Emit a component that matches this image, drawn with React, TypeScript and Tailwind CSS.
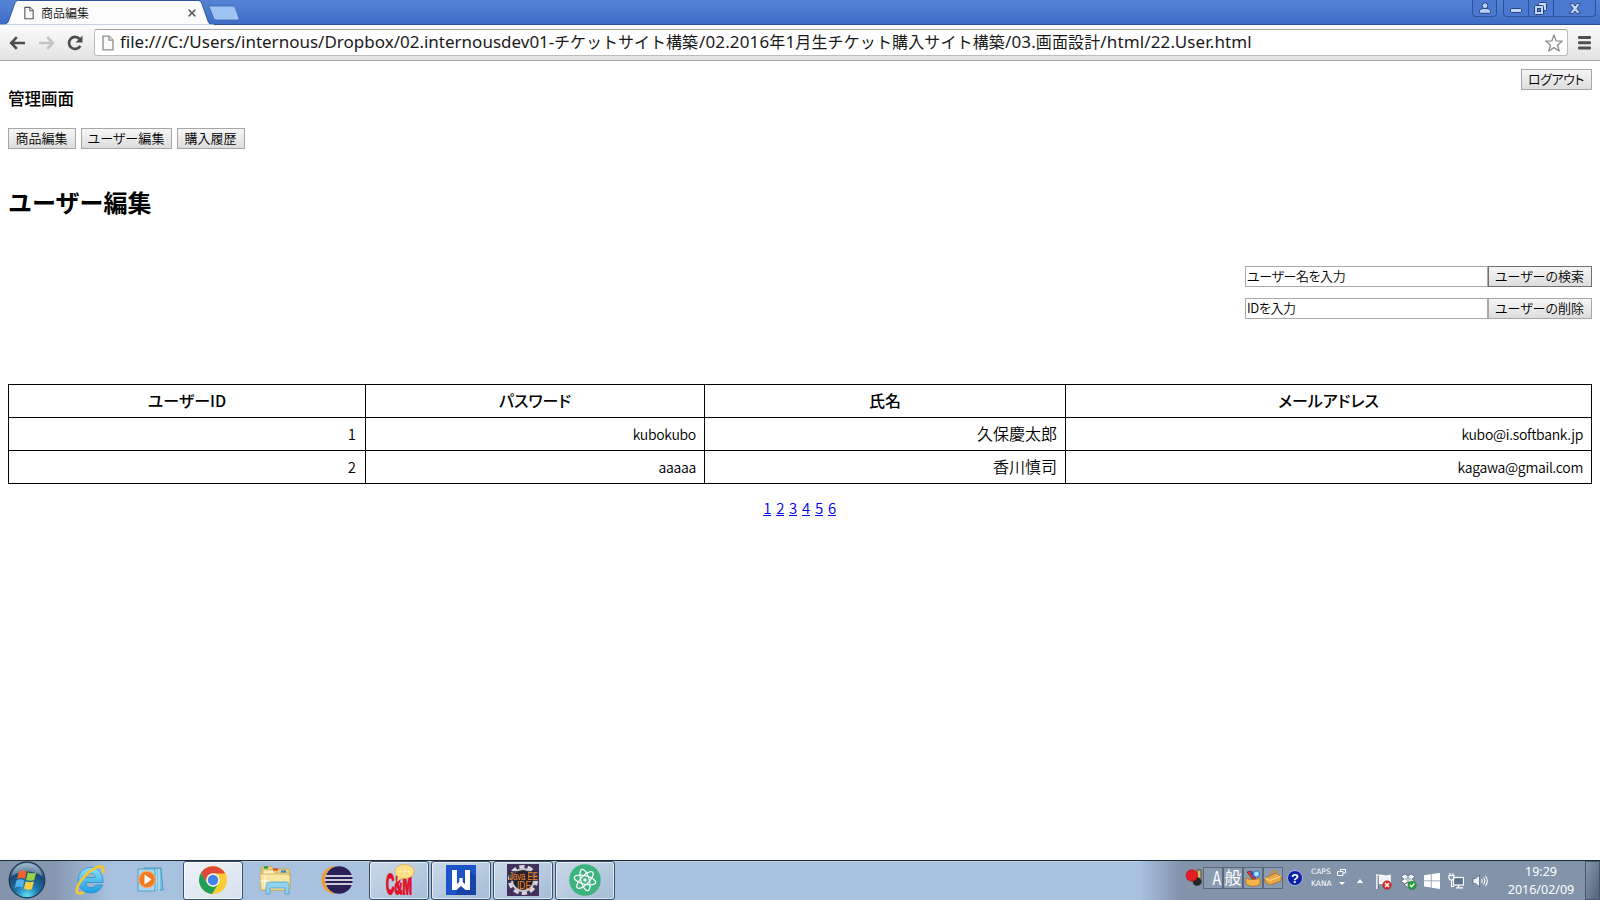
import type { ReactNode } from "react";

const users = [
  { id: "1", password: "kubokubo", name: "久保慶太郎", mail: "kubo@i.softbank.jp" },
  { id: "2", password: "aaaaa", name: "香川慎司", mail: "kagawa@gmail.com" },
];

const pages = ["1", "2", "3", "4", "5", "6"];

function PageIcon({ className }: { className: string }) {
  return (
    <svg viewBox="0 0 12 16" className={className} fill="#fbfbfb" strokeWidth="1.3" strokeLinejoin="round">
      <path d="M1 1.2h6.2l3.8 3.8v9.8H1z" />
      <path d="M7 1.2V5.2h4" />
    </svg>
  );
}

function TabStrip() {
  return (
    <div className="relative flex h-[25px] bg-linear-to-b from-[#5584d6] to-[#3f6dc6] border-b border-[#2c4f97]">
      <svg className="absolute left-0 top-0 h-[25px] w-[245px]" viewBox="0 0 245 25">
        <path d="M0 25c5 0 7-1 8.500-4L14.500 4c1-2.500 2-3.500 4-3.500H197.500c2.500 0 3.500 1 4.500 3.500l6 17c1 3 3 4 6 4z" fill="#fbfbfb" stroke="#2f539c" strokeWidth="1" />
        <path d="M0 24.500h214v.5H0z" fill="#fbfbfb" />
        <path d="M211 6h21c2 0 3 .6 3.600 2.300l3.300 10c.4 1.200 0 1.700-1 1.700h-21c-1.800 0-2.700-.6-3.400-2.300L209.600 8c-.5-1.300 0-2 1.400-2z" fill="#9fc3f3" stroke="#3c66b5" strokeWidth=".8" />
      </svg>
      <div className="relative flex w-[210px] items-center pl-[24px] pr-[14px] pt-[1px]">
        <PageIcon className="h-[14px] w-[10px] stroke-[#555]" />
        <span className="ml-[7px] font-['Noto_Sans_CJK_JP',sans-serif] text-[12px] font-[350] leading-none text-[#111]">商品編集</span>
        <svg viewBox="0 0 8 8" className="ml-auto h-[8px] w-[8px]" stroke="#5f5f5f" strokeWidth="1.500">
          <path d="M.6.6l6.800 6.800M7.400.6L.6 7.400" />
        </svg>
      </div>
      <div className="ml-auto mr-[4px] flex h-[17px] gap-[6px]">
        <div className="flex w-[25px] items-center justify-center rounded-b-[4px] border border-t-0 border-[#2d519b] bg-[#4b79cf]">
          <svg viewBox="0 0 12 12" className="h-[12px] w-[12px]" fill="#b9cff3" stroke="#25437f" strokeWidth="1">
            <path d="M1.500 11.300c-.6 0-1-.4-1-1V9.200c0-1.500 1.800-2.400 3.500-2.700h4c1.700.3 3.500 1.200 3.500 2.700v1.100c0 .6-.4 1-1 1z" />
            <circle cx="6" cy="3.700" r="2.900" />
          </svg>
        </div>
        <div className="flex w-[93px] divide-x divide-[#2d519b] rounded-b-[4px] border border-t-0 border-[#2d519b] bg-[#4b79cf]">
          <div className="flex w-[25px] items-center justify-center">
            <svg viewBox="0 0 12 5" className="mt-[4px] h-[5px] w-[12px]"><rect x=".5" y=".5" width="11" height="4" rx="1" fill="#c4d6f5" stroke="#25437f" /></svg>
          </div>
          <div className="flex w-[25px] items-center justify-center">
            <svg viewBox="0 0 13 13" className="mr-[1px] h-[13px] w-[13px]" fill="#c4d6f5" stroke="#25437f">
              <rect x="4.500" y=".5" width="8" height="8" rx="1" />
              <rect x=".5" y="3.500" width="9" height="9" rx="1" />
              <rect x="3.500" y="6.500" width="3" height="3" fill="#4b79cf" />
            </svg>
          </div>
          <div className="flex flex-1 items-center justify-center">
            <svg viewBox="0 0 12 11" className="h-[11px] w-[12px]" fill="#c4d6f5" stroke="#25437f" strokeWidth=".9">
              <path d="M.6.6h3.600L6 3l1.800-2.400h3.600L8 5.500l3.400 4.900H7.800L6 8l-1.800 2.400H.6L4 5.500z" />
            </svg>
          </div>
        </div>
      </div>
    </div>
  );
}

function Toolbar() {
  return (
    <div className="flex h-[36px] items-center border-b border-[#a5a5a5] bg-linear-to-b from-[#fbfbfb] to-[#e3e3e3] pl-[9px] pr-[9px]">
      <svg viewBox="0 0 16 14" className="h-[14px] w-[16px]" fill="none" stroke="#4d4d4d" strokeWidth="2.600">
        <path d="M7.800 1.200L2.200 7l5.600 5.800M2.500 7H16" />
      </svg>
      <svg viewBox="0 0 16 14" className="ml-[14px] h-[14px] w-[16px]" fill="none" stroke="#c3c3c3" strokeWidth="2.600">
        <path d="M8.200 1.200L13.800 7l-5.600 5.800M13.500 7H0" />
      </svg>
      <svg viewBox="0 0 16 16" className="ml-[12px] mr-[1px] h-[16px] w-[16px]">
        <path d="M13.300 10.800A6 6 0 1 1 12.600 4" fill="none" stroke="#4d4d4d" strokeWidth="2.700" />
        <path d="M15.500.5v7h-7z" fill="#4d4d4d" />
      </svg>
      <div className="ml-[10px] flex h-[27px] flex-1 items-center rounded-[3px] border border-[#bcbcbc] border-t-[#a3a3a3] bg-white pl-[7px] pr-[4px]">
        <PageIcon className="h-[16px] w-[12px] stroke-[#8c8c8c]" />
        <div className="mb-[2px] ml-[6px] flex items-baseline whitespace-pre font-['Noto_Sans','Noto_Sans_CJK_JP',sans-serif] text-[17px] leading-[24px] text-[#1a1a1a]">
          <span className="w-[434px]">file:///C:/Users/internous/Dropbox/02.internousdev01-</span>
          <span className="w-[145px] text-[16px]">チケットサイト構築</span>
          <span className="tracking-[0.13px]">/02.2016<span className="text-[16px]">年</span>1<span className="text-[16px]">月生チケット購入サイト構築</span>/03.<span className="text-[16px]">画面設計</span>/html/22.User.html</span>
        </div>
        <svg viewBox="0 0 18 18" className="ml-auto h-[18px] w-[18px]" fill="#fff" stroke="#8b8b8b" strokeWidth="1.300" strokeLinejoin="round">
          <path d="M9 1l2.200 5.900 6.100.2-4.800 3.900 1.700 6L9 13.600 3.800 17l1.700-6L.7 7.100l6.100-.2z" />
        </svg>
      </div>
      <svg viewBox="0 0 13 14" className="ml-[10px] h-[14px] w-[13px]" fill="#505050">
        <rect y="0" width="13" height="3" rx="1" />
        <rect y="5.300" width="13" height="3" rx="1" />
        <rect y="10.600" width="13" height="3" rx="1" />
      </svg>
    </div>
  );
}

function Button({ className, children }: { className: string; children: ReactNode }) {
  return (
    <button
      className={`flex h-[21px] items-center justify-center whitespace-nowrap border bg-linear-to-b from-[#f6f6f6] to-[#dddddd] pb-[2px] pr-[1px] text-[13px] font-[350] leading-none text-black ${className}`}
    >
      {children}
    </button>
  );
}

function SearchRow({ value, action, border }: { value: string; action: string; border: string }) {
  return (
    <div className="flex justify-end">
      <input
        defaultValue={value}
        className="h-[21px] w-[243px] border border-[#a9a9a9] bg-white pb-[2px] pl-px text-[13px] font-[350] leading-none tracking-[-0.4px] text-black [font-feature-settings:'palt']"
      />
      <Button className={`w-[104px] tracking-[0px] [font-feature-settings:'palt'] ${border}`}>{action}</Button>
    </div>
  );
}

function Content() {
  const head = "border border-black p-0 pb-[2px] text-center font-medium";
  const latin = "border border-black py-0 pl-0 pr-[8px] text-right text-[14px] tracking-[-0.3px]";
  return (
    <main className="flex-1 px-[8px] pt-[8px] font-['Noto_Sans_CJK_JP',sans-serif] text-[16px] font-[350] text-black">
      <div className="flex h-[21px] justify-end">
        <Button className="w-[71px] border-[#a6a6a6] tracking-[-0.400px] [font-feature-settings:'palt']">ログアウト</Button>
      </div>
      <h3 className="h-[16px] text-[16.500px] font-medium leading-[16px]">管理画面</h3>
      <div className="mt-[22px] flex gap-[5px]">
        <Button className="w-[68px] border-[#a6a6a6]">商品編集</Button>
        <Button className="w-[91px] border-[#a6a6a6] tracking-[0.100px] [font-feature-settings:'palt']">ユーザー編集</Button>
        <Button className="w-[68px] border-[#a6a6a6]">購入履歴</Button>
      </div>
      <h1 className="mt-[41px] h-[24px] text-[24px] font-bold leading-[24px]">ユーザー編集</h1>
      <div className="mt-[52px] flex flex-col gap-[11px]">
        <SearchRow value="ユーザー名を入力" action="ユーザーの検索" border="border-[#707070]" />
        <SearchRow value="IDを入力" action="ユーザーの削除" border="border-[#a6a6a6]" />
      </div>
      <table className="mt-[65px] w-full table-fixed border-collapse leading-[20px]">
        <colgroup>
          <col className="w-[357px]" />
          <col className="w-[339px]" />
          <col className="w-[361px]" />
          <col />
        </colgroup>
        <thead>
          <tr className="h-[33px] [font-feature-settings:'palt']">
            <th className={head}>ユーザーID</th>
            <th className={head}>パスワード</th>
            <th className={head}>氏名</th>
            <th className={head}>メールアドレス</th>
          </tr>
        </thead>
        <tbody>
          {users.map((user) => (
            <tr key={user.id} className="h-[33px]">
              <td className="border border-black p-0 pr-[9px] text-right text-[15px]">{user.id}</td>
              <td className={latin}>{user.password}</td>
              <td className="border border-black p-0 pb-[2px] pr-[8px] text-right">{user.name}</td>
              <td className={latin}>{user.mail}</td>
            </tr>
          ))}
        </tbody>
      </table>
      <nav className="mt-[14px] flex justify-center gap-[5px] pr-px text-[15px] leading-[20px] tracking-[-0.3px] text-[#0000ee]">
        {pages.map((page) => (
          <a key={page} href="#" className="underline">{page}</a>
        ))}
      </nav>
    </main>
  );
}

function StartOrb() {
  return (
    <svg viewBox="0 0 38 38" className="h-[38px] w-[38px]">
      <defs>
        <radialGradient id="orb" cx=".5" cy=".95" r=".95">
          <stop offset="0" stopColor="#5fe0f5" />
          <stop offset=".35" stopColor="#1d78ae" />
          <stop offset=".7" stopColor="#1b4773" />
          <stop offset="1" stopColor="#87a9c4" />
        </radialGradient>
      </defs>
      <circle cx="19" cy="19" r="17.800" fill="url(#orb)" stroke="#1c3651" strokeWidth="1.200" />
      <path d="M4 15C6 6 12 2.500 19 2.500S32 6 34 15C26 9 12 9 4 15z" fill="#fff" opacity=".3" />
      <path d="M11 10.500c3-1.600 5.200-1.200 7.700 0l-1.900 7.500c-2.500-1.300-4.800-1.500-7.800-.2z" fill="#f0642c" />
      <path d="M19.800 11.200c2.500 1.300 5.200 1.500 8.400.2l-2 7.500c-2.700 1.200-5.400 1-8.100-.2z" fill="#9bd044" />
      <path d="M8.600 19.200c2.900-1.300 5.400-1.100 7.800.2l-1.900 7.400c-2.300-1.300-4.800-1.300-7.700-.1z" fill="#51b2ee" />
      <path d="M17.800 20.200c2.500 1.200 5.200 1.400 8.100.2l-2 7.500c-2.600 1.200-5.300 1-8-.3z" fill="#fdce3c" />
    </svg>
  );
}

function ExplorerE() {
  return (
    <svg viewBox="0 0 32 32" className="h-[32px] w-[32px]">
      <defs>
        <linearGradient id="ie" x1="0" y1="0" x2="0" y2="1">
          <stop offset="0" stopColor="#8fe0fc" />
          <stop offset="1" stopColor="#1b9ce4" />
        </linearGradient>
      </defs>
      <path d="M16.500 3.500C9 3.500 4 9.500 4 16.500S9.500 29 17 29c5.500 0 10-3 11.500-8h-7c-1 1.800-2.500 2.700-4.600 2.700-3.300 0-5.300-2-5.600-5.200H29C29.500 9.500 24.500 3.500 16.500 3.500zM11.500 13.500c.6-2.700 2.500-4.200 5-4.200s4.500 1.500 4.900 4.200z" fill="url(#ie)" stroke="#258bc9" strokeWidth=".7" />
      <path d="M29 8.500C30.500 4 28 1 23 3.200 14 7 5 17.500 3 24.500c-1.200 4.500 1.500 6 6 4.300" fill="none" stroke="#f6c832" strokeWidth="2.600" strokeLinecap="round" />
    </svg>
  );
}

function MediaPlayer() {
  return (
    <svg viewBox="0 0 30 28" className="h-[28px] w-[30px]">
      <path d="M8 2h17l2 22H8z" fill="#79bfe2" stroke="#4598c3" />
      <path d="M20 3v22M23 3v22" stroke="#d7f0fc" strokeWidth="1" />
      <rect x="2" y="3" width="17" height="22" fill="#a8d8ef" stroke="#4a9dc8" />
      <circle cx="11" cy="13.500" r="8.300" fill="#f27a22" stroke="#fbb06e" />
      <path d="M8.500 8.500l7 5-7 5z" fill="#fff" />
    </svg>
  );
}

function ChromeIcon() {
  return (
    <svg viewBox="0 0 30 30" className="h-[30px] w-[30px]">
      <circle cx="15" cy="15" r="14" fill="#fbcd32" />
      <path d="M2.900 8A14 14 0 0 1 27.100 8.500H15A6.500 6.500 0 0 0 9.300 18.200z" fill="#df4839" />
      <path d="M2.900 8A14 14 0 0 0 14 29l6.600-10.500A6.500 6.500 0 0 1 9.300 18.200z" fill="#1f9d5a" />
      <circle cx="15" cy="15" r="6.700" fill="#f3f3f3" />
      <circle cx="15" cy="15" r="5.200" fill="#4283ea" />
    </svg>
  );
}

function FolderIcon() {
  return (
    <svg viewBox="0 0 34 30" className="h-[30px] w-[34px]">
      <path d="M4 2l9-1 2 3h16l1 5v16H3V6z" fill="#ead17d" stroke="#c4a04a" strokeWidth=".8" />
      <path d="M5 5h10l2 3h14v4H5z" fill="#fff1b8" stroke="#bf9e4e" strokeWidth=".6" />
      <path d="M6 2.500h4" stroke="#21a04a" strokeWidth="2.400" /><path d="M15 4.500h5" stroke="#dc4d27" strokeWidth="2.200" /><path d="M23 6.500h5" stroke="#3186d2" strokeWidth="2.200" />
      <path d="M2 9h28l2 2v14H3z" fill="#f8e6a1" stroke="#cba956" strokeWidth=".8" />
      <path d="M8 29V20c0-2 1-3 3-3h17c2 0 3 1 3 3v9h-4v-6H12v6z" fill="#91d2ef" stroke="#4e9fc9" strokeWidth=".8" />
      <path d="M7 10v12M2 16h10" stroke="#fff" strokeWidth=".8" />
    </svg>
  );
}

function EclipseIcon() {
  return (
    <svg viewBox="0 0 34 30" className="h-[30px] w-[34px]">
      <circle cx="15.500" cy="15" r="14" fill="#f29b2e" />
      <circle cx="19" cy="15" r="14" fill="#a7c1df" />
      <circle cx="19" cy="15" r="13.700" fill="#2a2057" />
      <path d="M5.500 11h27M5 15h28M5.500 19h27" stroke="#fff" strokeWidth="1.700" />
    </svg>
  );
}

function ChatIcon() {
  return (
    <svg viewBox="0 0 34 34" className="h-[34px] w-[34px] overflow-visible">
      <text x="4" y="31" textLength="26" lengthAdjust="spacingAndGlyphs" fontFamily="Liberation Sans, sans-serif" fontWeight="700" fontSize="29" fill="#e1102a" stroke="#e1102a" strokeWidth="1.800">C&amp;M</text>
      <ellipse cx="22.500" cy="8.500" rx="9.700" ry="7" fill="#fde186" stroke="#d9ae48" strokeWidth=".8" />
      <path d="M16 13l-1 6 5-4z" fill="#fde186" />
      <g fill="#fff6cf"><circle cx="18" cy="8.500" r="1" /><circle cx="22.500" cy="8.500" r="1" /><circle cx="27" cy="8.500" r="1" /></g>
    </svg>
  );
}

function WriterIcon() {
  return (
    <svg viewBox="0 0 30 30" className="h-[30px] w-[30px]">
      <rect width="30" height="30" fill="#1d55c8" />
      <path d="M13 20L24 6l6 6v18H9z" fill="#1744a6" />
      <path d="M6 5h5v14l2.300-2V13h3.400v4l2.300 2V5h5v20h-4.500L15 21l-4.500 4H6z" fill="#fff" />
    </svg>
  );
}

function JavaIcon() {
  return (
    <svg viewBox="0 0 32 32" className="h-[32px] w-[32px] overflow-visible">
      <rect width="32" height="32" fill="#42315e" />
      <circle cx="16" cy="16" r="12.800" fill="none" stroke="#d8d8dc" strokeWidth="4.500" strokeDasharray="5 3.050" />
      <circle cx="16" cy="16" r="11" fill="#241e28" stroke="#c6c6cb" strokeWidth="2" />
      <path d="M2 7h29v10H2z" fill="#2b2130" opacity=".8" />
      <g fontFamily="Liberation Sans, sans-serif" fill="#f58a25">
        <text x="2" y="15.500" textLength="29" lengthAdjust="spacingAndGlyphs" fontSize="10.500">Java EE</text>
        <text x="10" y="24.500" textLength="14" lengthAdjust="spacingAndGlyphs" fontSize="10.500">IDE</text>
      </g>
    </svg>
  );
}

function AtomIcon() {
  return (
    <svg viewBox="0 0 32 32" className="h-[32px] w-[32px]">
      <circle cx="16" cy="16" r="15.800" fill="#3db37d" />
      <g fill="none" stroke="#fff" strokeWidth="1.200">
        <ellipse cx="16" cy="16" rx="11" ry="4.200" transform="rotate(14 16 16)" />
        <ellipse cx="16" cy="16" rx="11" ry="4.200" transform="rotate(74 16 16)" />
        <ellipse cx="16" cy="16" rx="11" ry="4.200" transform="rotate(134 16 16)" />
      </g>
      <circle cx="16" cy="16" r="1.800" fill="#fff" />
    </svg>
  );
}

function TaskButton({ active, children }: { active?: boolean; children: ReactNode }) {
  return (
    <div
      className={`flex h-[39px] w-[60px] items-center justify-center rounded-[3px] border border-[#39506b] pb-px pr-px shadow-[inset_0_0_0_1px_rgba(255,255,255,0.6)] ${
        active ? "bg-linear-to-br from-[#eef3f9] to-[#d6e0ee]" : "bg-linear-to-br from-[#cbd9e8] to-[#a5bdd7]"
      }`}
    >
      {children}
    </div>
  );
}

function ImeBox({ children }: { children: ReactNode }) {
  return (
    <div className="flex h-[22px] w-[20px] items-center justify-center border border-[#57687d] bg-[#8b9bb0] font-['Noto_Sans_CJK_JP',sans-serif] text-[17px] leading-none text-white">
      {children}
    </div>
  );
}

function Tray() {
  return (
    <div className="flex h-full w-[460px] bg-linear-to-r from-[#a7c1df] from-0% via-[#8293aa] via-[9%] to-[#8293aa]">
      <div className="flex h-[38px] w-[445px] items-center pl-[45px]">
        <svg viewBox="0 0 18 20" className="mb-[4px] h-[20px] w-[18px]">
          <path d="M12 2h4v14h-4z" fill="#d8b56c" stroke="#4a3a2a" strokeWidth=".8" />
          <circle cx="12" cy="13.500" r="4.300" fill="#262626" />
          <circle cx="6.800" cy="7.500" r="5.800" fill="#e61b23" stroke="#a91018" strokeWidth=".6" />
        </svg>
        <div className="mb-[4px] flex">
          <ImeBox><span className="mb-[3px] ml-[8px] scale-x-75 text-[19px]">A</span></ImeBox>
          <ImeBox><span className="mb-[3px]">般</span></ImeBox>
          <ImeBox>
            <svg viewBox="0 0 18 18" className="h-[18px] w-[18px]">
              <path d="M3 3l3-1 6 7-3 2z" fill="#d63826" stroke="#47211b" strokeWidth=".6" />
              <path d="M7 2l3 6" stroke="#2f4ac1" strokeWidth="1.800" />
              <circle cx="12.500" cy="5" r="3" fill="#a9e0fb" stroke="#3b78c7" strokeWidth="1.200" />
              <path d="M2 9c4 2 10 2 14 0v6c-4 3-10 3-14 0z" fill="#f5b54e" stroke="#a0661b" strokeWidth=".7" />
            </svg>
          </ImeBox>
          <ImeBox>
            <svg viewBox="0 0 18 18" className="h-[18px] w-[18px]">
              <path d="M1 9l11-5 5 3v5L6 16l-5-3z" fill="#eda846" stroke="#9a6420" strokeWidth=".7" />
              <path d="M1 9l5 2.500L17 7" fill="none" stroke="#ffe1a0" />
              <path d="M7 6V4l4-2 2 1v2" fill="none" stroke="#d28a2d" strokeWidth="1.300" />
            </svg>
          </ImeBox>
        </div>
        <div className="mb-[4px] ml-[4px] flex h-[16px] w-[16px] items-center justify-center rounded-full border border-[#9cb4e4] bg-[#0c1fa5] font-['Liberation_Sans',sans-serif] text-[13px] font-bold leading-none text-white">?</div>
        <div className="mb-[5px] ml-[8px] flex w-[21px] flex-col gap-[4px] font-['DejaVu_Sans',sans-serif] text-[7.5px] leading-[8px] text-white">
          <span>CAPS</span>
          <span>KANA</span>
        </div>
        <svg viewBox="0 0 9 18" className="mb-[7px] ml-[5px] h-[18px] w-[9px]" fill="none" stroke="#fff">
          <path d="M3.500 3V1.500h5v3.500H6.500M.5 3.500h5.500v4H.5zM3 1.500h5.500" />
          <path d="M2 14h6l-3 3z" fill="#fff" stroke="none" />
        </svg>
        <svg viewBox="0 0 10 6" className="ml-[9px] mt-[2px] h-[6px] w-[10px]" fill="#fff" stroke="#5b6a7f" strokeWidth=".5">
          <path d="M1 5.500l4-5 4 5z" />
        </svg>
        <svg viewBox="0 0 16 17" className="ml-[11px] mt-[2px] h-[17px] w-[16px]">
          <path d="M1 1v15M3 2.500c4-1 5 2 11 0v8c-5 1.500-7-1-11 0z" fill="#edf1f6" stroke="#fff" strokeWidth="1.500" />
          <path d="M2.300 3v13" stroke="#3f4e62" strokeWidth=".7" />
          <circle cx="11" cy="12" r="4.300" fill="#e12e29" stroke="#a31b17" strokeWidth=".5" />
          <path d="M9 10l4 4M13 10l-4 4" stroke="#fff" strokeWidth="1.400" />
        </svg>
        <svg viewBox="0 0 17 17" className="ml-[8px] mt-[2px] h-[17px] w-[17px]">
          <path d="M5 1L8 3.500 11 1l4 2.500L12 6l3 2.500-4 2.500-3-2.500L5 11 1 8.500 4 6 1 3.500zM4 11.500l4 3 4-3-4-2z" fill="#fff" stroke="#3e4c60" strokeWidth=".6" />
          <path d="M8 3.500L4 6l4 2.500L12 6z" fill="#b8c2cf" />
          <circle cx="12" cy="12.200" r="4.200" fill="#25a23e" stroke="#0e6b25" strokeWidth=".5" />
          <path d="M10 12l1.600 1.700 2.800-3.200" fill="none" stroke="#fff" strokeWidth="1.400" />
        </svg>
        <svg viewBox="0 0 16 16" className="ml-[7px] mt-[2px] h-[16px] w-[16px]" fill="#fff">
          <path d="M0 2.300L6.800 1.200v6.300H0zM7.600 1.100L16 0v7.500H7.600zM0 8.300h6.800v6.300L0 13.600zM7.600 8.300H16V16l-8.400-1.200z" />
        </svg>
        <svg viewBox="0 0 16 16" className="ml-[8px] mt-[2px] h-[16px] w-[16px]" fill="none" stroke="#fff" strokeWidth="1.200">
          <rect x="5.500" y="4.500" width="10" height="7.500" fill="#5f7087" />
          <path d="M8 14.800h7M10.500 12v2.500" />
          <path d="M1 2.500h5V5c0 1.500-1 2-2.500 2S1 6.500 1 5zM2 0v2.500M5 0v2.500M3.500 7v6.500H6" />
        </svg>
        <svg viewBox="0 0 16 16" className="ml-[8px] mt-[2px] h-[16px] w-[16px]" fill="none" stroke="#fff" strokeWidth="1.100">
          <path d="M1 5.500h2.500L7.500 2v12L3.500 10.500H1z" fill="#eef2f6" stroke="#3c4a5d" strokeWidth=".6" />
          <path d="M9.500 6c.8 1.200.8 2.800 0 4M11.500 4.500c1.500 2 1.500 5 0 7M13.500 3c2.200 3 2.200 7 0 10" />
        </svg>
        <div className="ml-[18px] mt-[2px] flex w-[70px] flex-col text-center font-['Noto_Sans',sans-serif] text-[12.5px] leading-[18px] text-white">
          <span>19:29</span>
          <span>2016/02/09</span>
        </div>
      </div>
      <div className="h-[39px] w-[15px] border border-[#44566d] bg-linear-to-br from-[#8897aa] via-[#6d7e93] to-[#536579]" />
    </div>
  );
}

function Taskbar() {
  return (
    <div className="flex h-[40px] border-t border-[#202c3c] bg-[#a7c1df] shadow-[inset_0_1px_0_#bfcfe1]">
      <div className="flex w-[183px] items-center bg-linear-to-r from-[#8293aa] from-0% via-[#8799b1] via-[30%] to-[#a7c1df] to-[60%] pb-px pl-[8px]">
        <StartOrb />
        <div className="ml-[28px]"><ExplorerE /></div>
        <div className="ml-[30px]"><MediaPlayer /></div>
      </div>
      <TaskButton active><ChromeIcon /></TaskButton>
      <div className="flex w-[126px] items-center pb-px pl-[15px]">
        <FolderIcon />
        <div className="ml-[28px]"><EclipseIcon /></div>
      </div>
      <div className="flex gap-[2px]">
        <TaskButton><ChatIcon /></TaskButton>
        <TaskButton><WriterIcon /></TaskButton>
        <TaskButton><JavaIcon /></TaskButton>
        <TaskButton><AtomIcon /></TaskButton>
      </div>
      <div className="ml-auto"><Tray /></div>
    </div>
  );
}

export default function App() {
  return (
    <div className="flex h-[900px] w-[1600px] flex-col overflow-hidden bg-white">
      <TabStrip />
      <Toolbar />
      <Content />
      <Taskbar />
    </div>
  );
}
